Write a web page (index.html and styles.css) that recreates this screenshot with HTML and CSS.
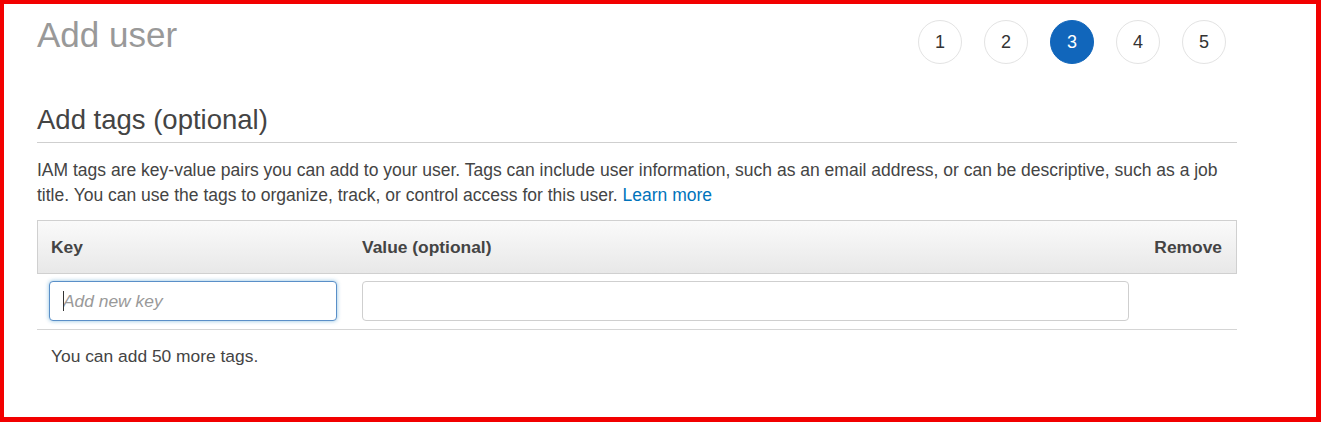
FILE: index.html
```html
<!DOCTYPE html>
<html lang="en">
<head>
<meta charset="utf-8">
<title>Add user</title>
<link rel="stylesheet" href="styles.css">
</head>
<body>
<div class="frame">
  <div class="page">
    <header class="top">
      <h1 class="title">Add user</h1>
      <ol class="steps">
        <li class="step">1</li>
        <li class="step">2</li>
        <li class="step active">3</li>
        <li class="step">4</li>
        <li class="step">5</li>
      </ol>
    </header>

    <h2 class="section-title">Add tags (optional)</h2>
    <p class="desc">IAM tags are key-value pairs you can add to your user. Tags can include user information, such as an email address, or can be descriptive, such as a job title. You can use the tags to organize, track, or control access for this user. <a class="link" href="#">Learn more</a></p>

    <div class="tags">
      <div class="thead">
        <div class="th th-key">Key</div>
        <div class="th th-value">Value (optional)</div>
        <div class="th th-remove">Remove</div>
      </div>
      <div class="trow">
        <div class="td td-key">
          <div class="field">
            <input class="input input-focus" type="text" placeholder="Add new key">
            <span class="caret"></span>
          </div>
        </div>
        <div class="td td-value">
          <input class="input" type="text">
        </div>
        <div class="td td-remove"></div>
      </div>
    </div>
    <p class="note">You can add 50 more tags.</p>
  </div>
</div>
</body>
</html>
```
FILE: styles.css
```css
* { box-sizing: border-box; }
html, body { margin: 0; padding: 0; background: #fff; }
body { font-family: "Liberation Sans", Arial, sans-serif; color: #444; }

.frame {
  width: 1321px;
  height: 422px;
  border-style: solid;
  border-color: #f20000;
  border-width: 4px 5px 5px 4px;
  background: #fff;
  overflow: hidden;
}

.page {
  width: 1200px;
  margin-left: 33px;
  padding-top: 11px;
}

.top {
  display: flex;
  justify-content: space-between;
  align-items: flex-start;
}

.title {
  margin: 0;
  font-size: 35px;
  line-height: 40px;
  font-weight: normal;
  color: #999;
}

.steps {
  list-style: none;
  margin: 5px 11px 0 0;
  padding: 0;
  display: flex;
  gap: 22px;
}

.step {
  width: 44px;
  height: 44px;
  border-radius: 50%;
  border: 1px solid #e3e3e3;
  display: flex;
  align-items: center;
  justify-content: center;
  font-size: 18px;
  color: #333;
}

.step.active {
  background: #1166bb;
  border-color: #1166bb;
  color: #fff;
}

.section-title {
  margin: 40px 0 0 0;
  padding-bottom: 6px;
  border-bottom: 1px solid #cfcfcf;
  font-size: 27.5px;
  line-height: 32px;
  font-weight: normal;
  color: #444;
}

.desc {
  margin: 15px 0 0 0;
  font-size: 17.5px;
  line-height: 25px;
  color: #444;
}

.link { color: #0073bb; text-decoration: none; }

.tags { margin-top: 12px; }

.thead, .trow {
  display: grid;
  grid-template-columns: 312px 1fr 96px;
}

.thead {
  height: 54px;
  border: 1px solid #d0d0d0;
  background: linear-gradient(#fafafa, #e8e8e8);
  align-items: center;
}

.th {
  font-size: 17.4px;
  font-weight: bold;
  color: #444;
}

.th-key { padding-left: 13px; }
.th-value { padding-left: 12px; }
.th-remove { text-align: right; padding-right: 14px; }

.trow {
  border-bottom: 1px solid #d5d5d5;
  padding: 7px 0 8px;
}

.td-key { padding: 0 12px; }
.td-value { padding: 0 12px 0 13px; }

.field { position: relative; }

.input {
  display: block;
  width: 100%;
  height: 40px;
  border: 1px solid #cfcfcf;
  border-radius: 4px;
  padding: 0 13px;
  font-family: "Liberation Sans", Arial, sans-serif;
  font-size: 17.4px;
  color: #444;
  background: #fff;
  outline: none;
}

.input::placeholder {
  color: #999;
  font-style: italic;
}

.input-focus {
  border-color: #5a8fc8;
  box-shadow: 0 0 4px rgba(0, 115, 187, 0.45);
}

.caret {
  position: absolute;
  left: 14px;
  top: 10px;
  width: 1px;
  height: 20px;
  background: #333;
}

.note {
  margin: 16px 0 0 14px;
  font-size: 17.4px;
  line-height: 20px;
  color: #444;
}
```
